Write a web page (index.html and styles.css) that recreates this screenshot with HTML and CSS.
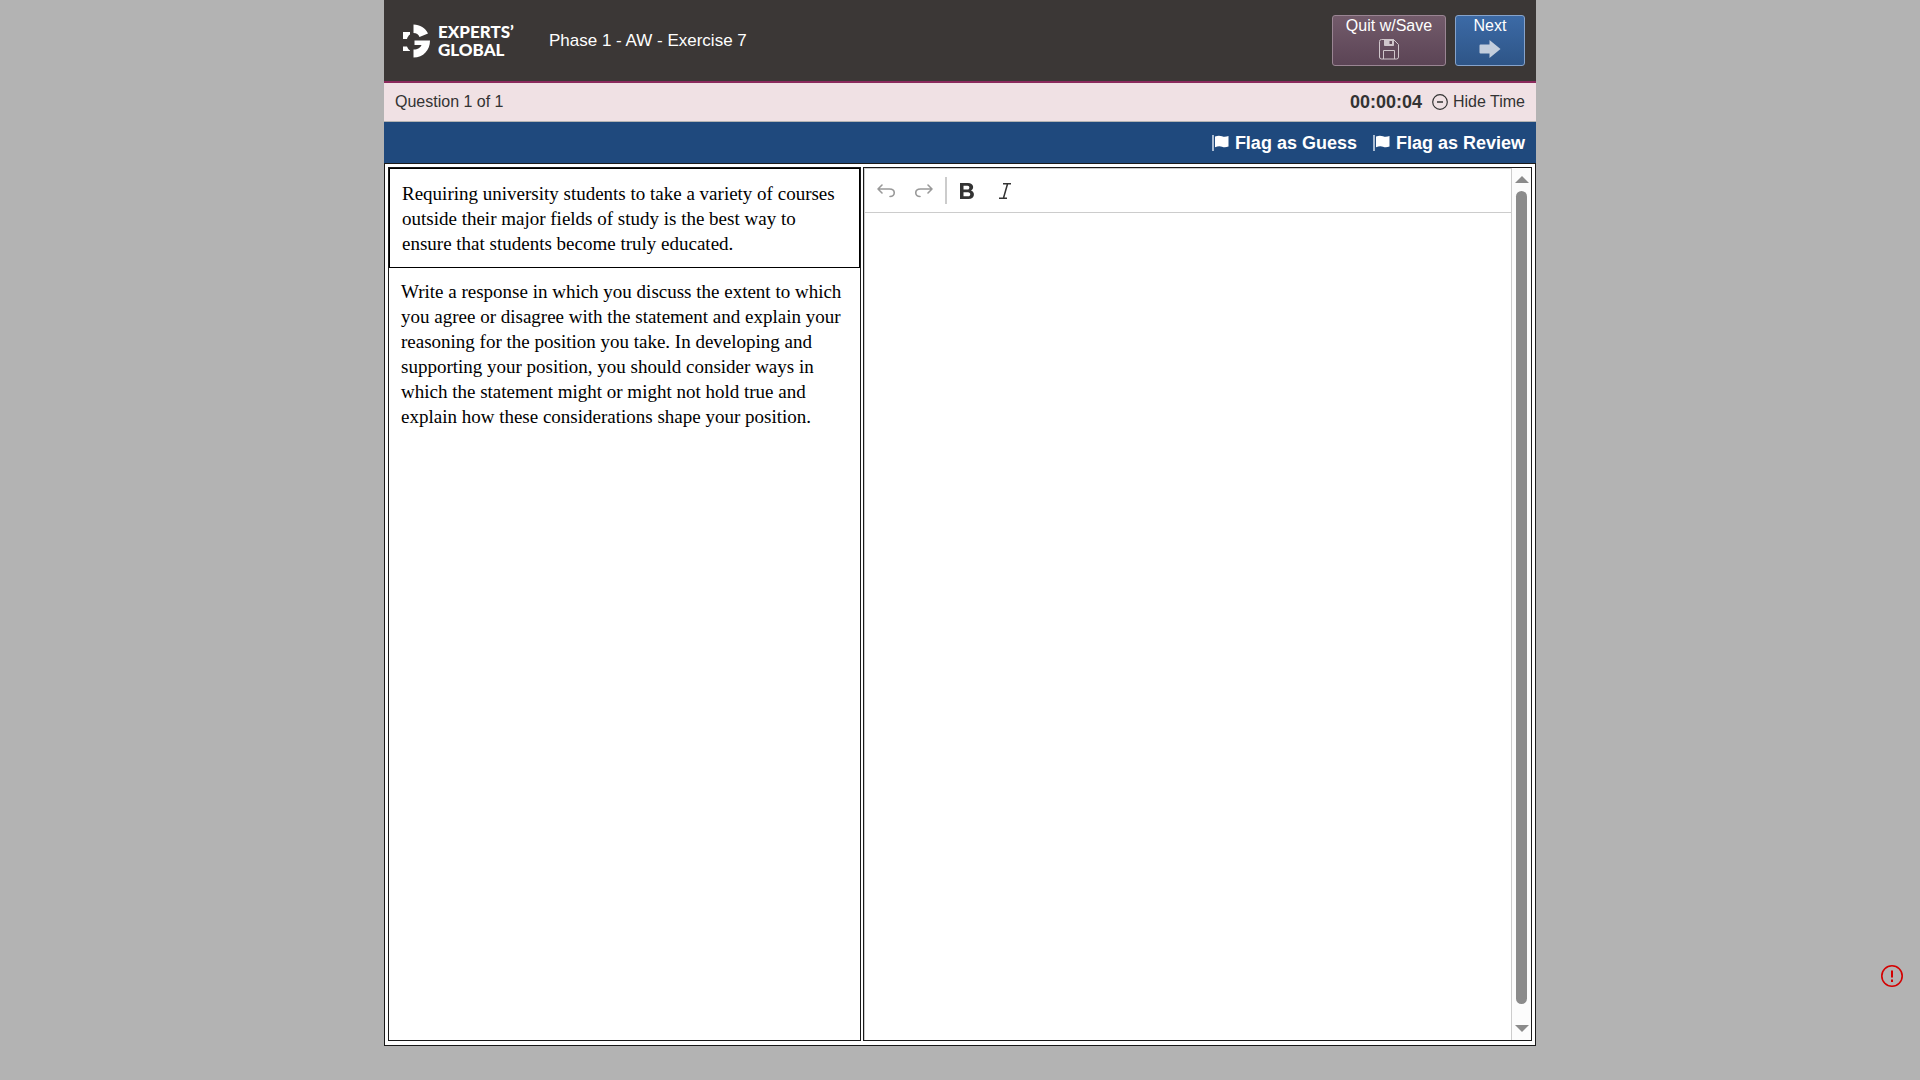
FILE: index.html
```html
<!DOCTYPE html>
<html lang="en">
<head>
<meta charset="utf-8">
<meta name="viewport" content="width=device-width, initial-scale=1">
<title>Phase 1 - AW - Exercise 7</title>
<link rel="stylesheet" href="styles.css">
</head>
<body>
<div class="app">
  <header class="header">
    <a class="logo" href="#">
      <svg class="logo-mark" viewBox="0 0 28 34" width="28" height="34" aria-hidden="true">
        <path fill="#fff" d="M11.500.500C18 .500 23.500 4 26 9.500L17.500 13C16.500 10.500 14.500 9 11.500 9ZM1 8H8V10.500C6.500 11.500 5.500 13 5 15H1ZM1 22.500H5C5.500 24 6.500 25.500 8 26.500V27H1ZM12.500 16.500H28C28 26 21.500 33.500 11.500 33.500V25.500C16 25.500 18.500 23.500 19.500 21H12.500Z"/>
      </svg>
      <span class="logo-text">EXPERTS’<br>GLOBAL</span>
    </a>
    <h1 class="title">Phase 1 - AW - Exercise 7</h1>
    <div class="actions">
      <button class="btn btn-quit" type="button">
        <span>Quit w/Save</span>
        <svg width="20" height="22" viewBox="0 0 20 22" fill="none" stroke="#cfc6cb" aria-hidden="true">
          <path d="M2.500 1.500H14.500L19.500 6.500V19Q19.500 21 17.500 21H2.500Q.500 21 .500 19V3.500Q.500 1.500 2.500 1.500Z"/>
          <path fill="#cfc6cb" d="M5.500 1.500H14.500V7.500H5.500Z"/>
          <path stroke="none" fill="#67505f" d="M10.500 3H13V6H10.500Z"/>
          <path d="M4.500 21V12.500H15.500V21"/>
        </svg>
      </button>
      <button class="btn btn-next" type="button">
        <span>Next</span>
        <svg width="22" height="22" viewBox="0 0 22 22" aria-hidden="true">
          <path fill="#c3cedd" d="M1.500 6.500H10.500V2L21.500 11L10.500 20V15.500H1.500Q.500 15.500 .500 14.500V7.500Q.500 6.500 1.500 6.500Z"/>
        </svg>
      </button>
    </div>
  </header>

  <div class="status">
    <span>Question 1 of 1</span>
    <div class="timer">
      <strong>00:00:04</strong>
      <button class="hide-time" type="button">
        <svg width="16" height="16" viewBox="0 0 16 16" fill="none" stroke="#333" aria-hidden="true">
          <circle cx="8" cy="8" r="7.300" stroke-width="1.200"/><path stroke-width="1.500" d="M5 8H11"/>
        </svg>
        Hide Time
      </button>
    </div>
  </div>

  <div class="flags">
    <button class="flag" type="button">
      <svg width="17" height="16" viewBox="0 0 17 16" aria-hidden="true"><path fill="#a9bbd2" d="M0 0H2V16H0Z"/><path fill="#fff" d="M3 1.500C6 .300 8 .500 10 1.300S14 2 16.500 1V11.500C14 12.500 12 12.500 10 11.700S6 11 3 12.200Z"/></svg>
      Flag as Guess
    </button>
    <button class="flag" type="button">
      <svg width="17" height="16" viewBox="0 0 17 16" aria-hidden="true"><path fill="#a9bbd2" d="M0 0H2V16H0Z"/><path fill="#fff" d="M3 1.500C6 .300 8 .500 10 1.300S14 2 16.500 1V11.500C14 12.500 12 12.500 10 11.700S6 11 3 12.200Z"/></svg>
      Flag as Review
    </button>
  </div>

  <main class="workspace">
    <section class="pane prompt">
      <p class="statement">Requiring university students to take a variety of courses outside their major fields of study is the best way to ensure that students become truly educated.</p>
      <p class="directions">Write a response in which you discuss the extent to which you agree or disagree with the statement and explain your reasoning for the position you take. In developing and supporting your position, you should consider ways in which the statement might or might not hold true and explain how these considerations shape your position.</p>
    </section>
    <section class="pane response">
      <div class="editor">
        <div class="toolbar">
          <button class="tool" type="button" aria-label="Undo">
            <svg width="20" height="20" viewBox="0 0 20 20" fill="none" stroke="#999" stroke-width="1.600" stroke-linecap="round" stroke-linejoin="round"><path d="M6 4L2 8L6 12M2 8H13.500C20 8 19.500 15.500 14 15.500"/></svg>
          </button>
          <button class="tool" type="button" aria-label="Redo">
            <svg width="20" height="20" viewBox="0 0 20 20" fill="none" stroke="#999" stroke-width="1.600" stroke-linecap="round" stroke-linejoin="round"><path d="M14 4L18 8L14 12M18 8H6.500C0 8 .500 15.500 6 15.500"/></svg>
          </button>
          <span class="separator"></span>
          <button class="tool" type="button" aria-label="Bold">
            <svg width="20" height="20" viewBox="0 0 20 20" fill="#333" fill-rule="evenodd"><path d="M3 2H11C17 2 17.500 8 14 9.500C18.500 11 18 18 11.500 18H3ZM6.500 4.700V8.500H10.500C13 8.500 13 4.700 10.500 4.700ZM6.500 11.200V15.300H11C14 15.300 14 11.200 11 11.200Z"/></svg>
          </button>
          <button class="tool" type="button" aria-label="Italic">
            <svg width="20" height="20" viewBox="0 0 20 20" fill="none" stroke="#333" stroke-width="1.500"><path d="M8 2.700H16M4 17.300H12M12.500 3L8.500 17"/></svg>
          </button>
        </div>
        <textarea class="essay" aria-label="Your response"></textarea>
      </div>
      <div class="scrollbar" aria-hidden="true">
        <span class="arrow-up"></span>
        <span class="thumb"></span>
        <span class="arrow-down"></span>
      </div>
    </section>
  </main>
</div>
<button class="report" type="button" aria-label="Report a problem">
  <svg width="22" height="22" viewBox="0 0 22 22" fill="none" stroke="#d40000"><circle cx="11" cy="11" r="10.200" stroke-width="1.600"/><path stroke-width="2" d="M11 5.500V12.500M11 14.500V17"/></svg>
</button>
</body>
</html>
```
FILE: styles.css
```css
* {
  box-sizing: border-box;
}

body {
  margin: 0;
  background: #b3b3b3;
  color: #333;
  font: 16px/20px "Liberation Sans", Arial, sans-serif;
}

button {
  margin: 0;
  padding: 0;
  border: 0;
  background: none;
  color: inherit;
  font: inherit;
  cursor: pointer;
}

svg {
  display: block;
  flex: none;
}

.app {
  display: flex;
  flex-direction: column;
  width: 60%;
  height: 100vh;
  min-height: 600px;
  margin: 0 auto;
  padding-bottom: 34px;
}

.header {
  display: flex;
  align-items: center;
  height: 83px;
  padding: 0 11px 0 18px;
  border-bottom: 2px solid #8b2a5c;
  background: #3b3736;
  color: #fff;
}

.logo {
  display: flex;
  align-items: center;
  gap: 8px;
  width: 147px;
  color: #fff;
  text-decoration: none;
}

.logo-text {
  font: 900 17px/18px Lato, sans-serif;
}

.title {
  margin: 0;
  font-size: 17px;
  font-weight: 400;
}

.actions {
  display: flex;
  gap: 9px;
  margin-left: auto;
}

.btn {
  display: flex;
  flex-direction: column;
  align-items: center;
  gap: 2px;
  height: 51px;
  border: 1px solid;
  border-radius: 3px;
}

.btn-quit {
  width: 114px;
  border-color: #9a8593;
  background: linear-gradient(#735b6b, #5b4455);
}

.btn-next {
  width: 70px;
  border-color: #86a3cb;
  background: linear-gradient(#3c6aa6, #2e5587);
}

.status {
  display: flex;
  align-items: center;
  justify-content: space-between;
  height: 39px;
  padding: 0 11px;
  border-bottom: 1px solid #b3b3b3;
  background: #f0e1e4;
}

.timer,
.hide-time {
  display: flex;
  align-items: center;
}

.timer {
  gap: 10px;
}

.timer strong {
  font-size: 18px;
}

.hide-time {
  gap: 5px;
}

.flags {
  display: flex;
  align-items: center;
  justify-content: flex-end;
  gap: 16px;
  height: 41px;
  padding: 0 11px;
  background: #1f497d;
}

.flag {
  display: flex;
  align-items: center;
  gap: 6px;
  color: #fff;
  font-size: 18px;
  font-weight: 700;
}

.workspace {
  display: grid;
  flex: 1;
  grid-template-columns: 473fr 669fr;
  gap: 2px;
  min-height: 0;
  padding: 3px 3px 4px;
  border: 1px solid #1a1a1a;
  background: #fff;
}

.pane {
  min-width: 0;
  border: 1px solid #1a1a1a;
}

.prompt {
  overflow: auto;
  color: #000;
  font: 19px/25px "Liberation Serif", "Times New Roman", serif;
}

.statement,
.directions {
  margin: 0;
}

.statement {
  padding: 12px 12px 11px;
  border: 1px solid #000;
}

.directions {
  padding: 11px 12px;
}

.response {
  display: flex;
}

.editor {
  display: flex;
  flex: 1;
  flex-direction: column;
  min-width: 0;
  border: 1px solid #ccc;
  border-bottom: 0;
}

.toolbar {
  display: flex;
  align-items: center;
  height: 44px;
  padding-left: 2px;
  border-bottom: 1px solid #ccc;
}

.tool {
  display: flex;
  align-items: center;
  justify-content: center;
  width: 38px;
  height: 38px;
}

.separator {
  width: 2px;
  height: 27px;
  margin: 0 1px 0 2px;
  background: #ccc;
}

.essay {
  flex: 1;
  width: 100%;
  padding: 12px;
  border: 0;
  outline: 0;
  resize: none;
  font: inherit;
}

.scrollbar {
  display: flex;
  flex-direction: column;
  align-items: center;
  width: 19px;
  padding: 8px 0;
  background: #fcfcfc;
}

.arrow-up,
.arrow-down {
  border: 0 solid transparent;
  border-right-width: 7px;
  border-left-width: 7px;
}

.arrow-up {
  border-bottom: 7px solid #8b8b8b;
}

.arrow-down {
  border-top: 7px solid #8b8b8b;
}

.thumb {
  flex: 1;
  width: 11px;
  margin: 8px 0 21px;
  border-radius: 6px;
  background: #8b8b8b;
}

.report {
  position: fixed;
  right: 17px;
  bottom: 93px;
}
```
